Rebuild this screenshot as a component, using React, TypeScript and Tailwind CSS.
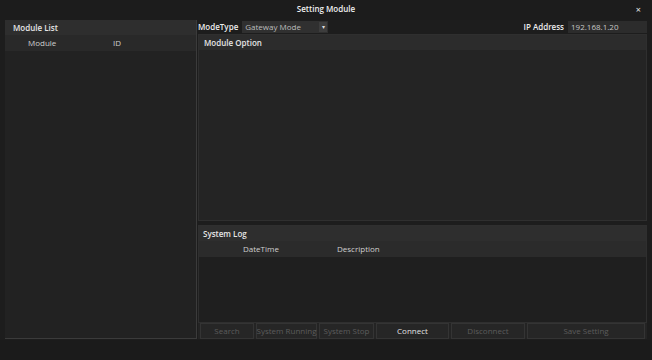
import React from 'react';

const font = { fontFamily: '"Open Sans", "Noto Sans", sans-serif' };

function Btn({ label, w, active = false }: { label: string; w: string; active?: boolean }) {
  return (
    <div
      className={`${w} h-full flex items-center justify-center whitespace-nowrap border border-[#343434] bg-[#262626] text-[8px] ${
        active ? 'text-[#e2e2e2]' : 'text-[#5c5c5c]'
      }`}
    >
      {label}
    </div>
  );
}

export default function App() {
  return (
    <div style={font} className="w-[652px] h-[360px] flex flex-col bg-[#1d1d1d] overflow-hidden select-none">
      {/* Title bar */}
      <div className="h-[20px] shrink-0 relative flex items-center justify-center bg-[#1c1c1c]">
        <span className="text-[8px] font-semibold text-[#f0f0f0] -mt-[2px]">Setting Module</span>
        <span className="absolute right-[11px] top-[3px] text-[9px] text-[#e8e8e8]">×</span>
      </div>

      {/* Main area */}
      <div className="flex-1 flex pl-[5px] pr-[5px] pb-[1px] gap-[1px] min-h-0">
        {/* Module list */}
        <div className="w-[192px] flex flex-col border-r border-b border-[#3b3b3b] bg-[#222222]">
          <div className="h-[15px] shrink-0 flex items-center pl-[8px] bg-[#2e2e2e] text-[8px] font-semibold text-[#e6e6e6]">
            Module List
          </div>
          <div className="h-[16px] shrink-0 flex items-center bg-[#292929] text-[8px] text-[#cfcfcf]">
            <span className="pl-[23px] w-[108px]">Module</span>
            <span>ID</span>
          </div>
          <div className="flex-1" />
        </div>

        {/* Right side */}
        <div className="flex-1 flex flex-col min-w-0">
          {/* Mode + IP row */}
          <div className="h-[14px] shrink-0 flex items-center text-[8px]">
            <span className="text-[#ececec] font-semibold">ModeType</span>
            <div className="ml-[4px] w-[86px] h-[12px] flex items-center bg-[#303030] text-[#bdbdbd]">
              <span className="pl-[3px] flex-1">Gateway Mode</span>
              <span className="w-[8px] h-[10px] mr-[1px] flex items-center justify-center bg-[#3d3d3d] text-[6px] text-[#dcdcdc]">▾</span>
            </div>
            <div className="flex-1" />
            <span className="text-[#ececec] font-semibold">IP Address</span>
            <div className="ml-[4px] w-[79px] h-[12px] flex items-center pl-[3px] bg-[#2c2c2c] text-[#c8c8c8]">
              192.168.1.20
            </div>
          </div>

          {/* Module option */}
          <div className="flex-1 flex flex-col bg-[#242424] border border-[#2f2f2f] min-h-0">
            <div className="h-[15px] shrink-0 flex items-center pl-[5px] bg-[#2c2c2c] text-[8px] font-semibold text-[#e6e6e6]">
              Module Option
            </div>
            <div className="flex-1" />
          </div>

          {/* System log */}
          <div className="h-[98px] mt-[4px] shrink-0 flex flex-col bg-[#222222] border border-[#2f2f2f]">
            <div className="h-[15px] shrink-0 flex items-center pl-[4px] bg-[#2e2e2e] text-[8px] font-semibold text-[#e6e6e6]">
              System Log
            </div>
            <div className="h-[16px] shrink-0 flex items-center bg-[#2b2b2b] text-[8px] text-[#cfcfcf]">
              <span className="pl-[44px] w-[138px]">DateTime</span>
              <span>Description</span>
            </div>
            <div className="flex-1 bg-[#1f1f1f]" />
          </div>

          {/* Buttons */}
          <div className="h-[16px] shrink-0 flex gap-[2px] pl-[2px] pr-[2px] bg-[#242424]">
            <Btn label="Search" w="w-[54px]" />
            <Btn label="System Running" w="w-[61px]" />
            <Btn label="System Stop" w="w-[55px]" />
            <Btn label="Connect" w="w-[73px]" active />
            <Btn label="Disconnect" w="w-[74px]" />
            <Btn label="Save Setting" w="flex-1" />
          </div>
        </div>
      </div>

      {/* Status strip */}
      <div className="h-[20px] shrink-0 bg-[#1b1b1b]" />
    </div>
  );
}
